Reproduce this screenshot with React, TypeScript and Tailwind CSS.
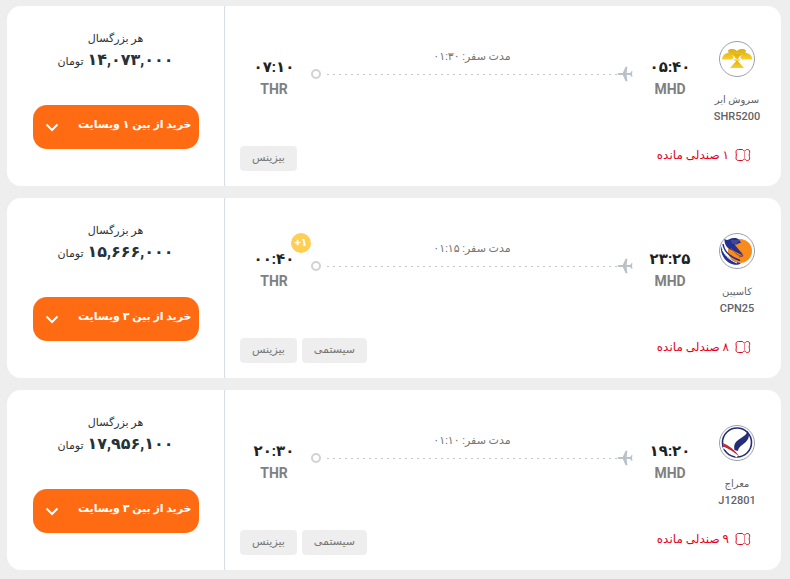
import type { ReactNode } from "react";

type Flight = {
  airline: string;
  code: string;
  logo: ReactNode;
  depart: string;
  arrive: string;
  nextDay?: boolean;
  duration: string;
  seats: string;
  tags: string[];
  price: string;
  sites: string;
};

function SoroushLogo() {
  return (
    <svg viewBox="0 0 36 36" className="size-9" aria-hidden="true">
      <circle cx="18" cy="18" r="17.5" fill="#fff" stroke="#9a9eb0" />
      <defs>
        <linearGradient id="gold" x1="0" y1="0" x2="0" y2="1">
          <stop offset="0" stopColor="#dcae12" />
          <stop offset="1" stopColor="#f8cf2c" />
        </linearGradient>
      </defs>
      <g fill="url(#gold)">
        <path d="M9 9.500C11 7.500 15.500 7.500 18 10C20.500 7.500 25 7.500 27 9.500L26.500 12C30 12 33 14.500 33.500 18.500H23L18 12.500L13 18.500H3C3.500 14.500 6 12 9.500 12Z" />
        <path d="M14 18.500H22L18.800 20L25 27H11L17.200 20Z" />
        <path d="M15 13H21L19 20H17Z" />
      </g>
      <path d="M13.500 14.500L17.500 19M22.500 14.500L18.500 19" stroke="#fff" strokeWidth=".8" />
    </svg>
  );
}

function CaspianLogo() {
  return (
    <svg viewBox="0 0 36 36" className="size-9" aria-hidden="true">
      <circle cx="18" cy="18" r="17.500" fill="#fff" stroke="#9a9eb0" />
      <circle cx="21" cy="18" r="12" fill="#f98b1c" />
      <path d="M5.500 5.500C8 9 10 5 15 5C19 5 21 7 22 10C19 9.500 19 12 15.500 11.500L21 18L24.500 23C20 21 16 18 12.500 17C8 15.500 5 11 5.500 5.500Z" fill="#25308d" />
      <path d="M2 13C4 21 10 27 22 30.500C17 33.500 9 31 5 25C2.500 21 1.500 17 2 13Z" fill="#25308d" />
      <path d="M4 11C5 18 11 24 21 27.500" stroke="#25308d" strokeWidth="1.500" fill="none" />
      <path d="M3.500 17C7 24 11 27 18 30" stroke="#fff" strokeWidth="1" fill="none" />
      <path d="M12 15C17 21 19 23 24 23L22 19M24 23L20 24" stroke="#8b4a3c" strokeWidth="1" fill="none" />
      <path d="M12 8L20 8M13 10L18 10" stroke="#7b82bc" strokeWidth=".6" />
    </svg>
  );
}

function MerajLogo() {
  return (
    <svg viewBox="0 0 36 36" className="size-9" aria-hidden="true">
      <circle cx="18" cy="18" r="17.500" fill="#fff" stroke="#9a9eb0" />
      <circle cx="18" cy="17.500" r="14.500" fill="#fff" stroke="#252c78" strokeWidth="1.600" />
      <path d="M28.500 5.500C31.500 11 29.500 15 25 18.500C20.500 22 19.500 23 19 26L15.500 25C14.500 20 16 17 20.500 14C25 11 28 9.500 28.500 5.500Z" fill="#252c78" />
      <path d="M4 18C10 20.500 16 25 20.500 31.500C15 27 10 24 5 22Z" fill="#c22b35" />
      <path d="M4 22.500C10 25 14 28 18 32" stroke="#fff" strokeWidth="1.500" fill="none" />
    </svg>
  );
}

function Plane() {
  return (
    <svg viewBox="0 0 16 16" className="size-4 shrink-0" fill="#b9c1c9" aria-hidden="true">
      <path d="M0.300 8C.300 7.400 2 7 3.500 7H5.800L8.600 .800H10.400L9.600 7H13.200L14.400 5.300H15.500L15 8L15.500 10.700H14.400L13.200 9H9.600L10.400 15.200H8.600L5.800 9H3.500C2 9 .300 8.600 .300 8Z" />
    </svg>
  );
}

function Ticket() {
  return (
    <svg viewBox="0 0 16 14" className="h-3.5 w-4 shrink-0" fill="none" stroke="#e50019" aria-hidden="true">
      <path d="M3.500 1.500H7.500C8 1.500 8.200 3 9.500 3C10.800 3 11 1.500 11.700 1.500H12.300C14 1.500 14.700 2.500 14.700 4C14.700 5.200 14.200 5.500 14.200 7C14.200 8.500 14.700 8.800 14.700 10C14.700 11.500 14 12.500 12.300 12.500H11.700C11 12.500 10.800 11 9.500 11C8.200 11 8 12.500 7.500 12.500H3.500C2 12.500 1 11.700 1 10.200C1 9 1.300 8.500 1.300 7C1.300 5.500 1 5 1 3.800C1 2.300 2 1.500 3.500 1.500Z" />
      <path d="M9.500 4.500V10" strokeDasharray="1 1" />
    </svg>
  );
}

const flights: Flight[] = [
  { airline: "سروش ایر", code: "SHR5200", logo: <SoroushLogo />, depart: "۰۵:۴۰", arrive: "۰۷:۱۰", duration: "۰۱:۳۰", seats: "۱", tags: ["بیزینس"], price: "۱۴,۰۷۳,۰۰۰", sites: "۱" },
  { airline: "کاسپین", code: "CPN25", logo: <CaspianLogo />, depart: "۲۳:۲۵", arrive: "۰۰:۴۰", nextDay: true, duration: "۰۱:۱۵", seats: "۸", tags: ["سیستمی", "بیزینس"], price: "۱۵,۶۶۶,۰۰۰", sites: "۳" },
  { airline: "معراج", code: "J12801", logo: <MerajLogo />, depart: "۱۹:۲۰", arrive: "۲۰:۳۰", duration: "۰۱:۱۰", seats: "۹", tags: ["سیستمی", "بیزینس"], price: "۱۷,۹۵۶,۱۰۰", sites: "۳" },
];

function Stop({ time, airport, nextDay }: { time: string; airport: string; nextDay?: boolean }) {
  return (
    <div className="relative flex flex-col items-center whitespace-nowrap">
      <time className="text-[15px] leading-6 font-bold text-[#212121]">{time}</time>
      <span className="text-sm leading-5 font-bold text-[#808080]">{airport}</span>
      {nextDay && (
        <span dir="ltr" className="absolute -top-3.5 -right-[17px] flex size-5 items-center justify-center rounded-full bg-[#ffce54] text-[11px] font-bold text-white">
          +۱
        </span>
      )}
    </div>
  );
}

function FlightCard({ flight }: { flight: Flight }) {
  return (
    <article className="flex overflow-hidden rounded-[14px] bg-white">
      <section className="flex min-w-0 flex-1 flex-col justify-between pb-[15px] pl-[15px]">
        <div className="flex items-start">
          <div className="flex w-[88px] shrink-0 flex-col items-center pt-[35px] whitespace-nowrap text-[#5f6368]">
            {flight.logo}
            <span className="mt-[15px] text-[10px] leading-4">{flight.airline}</span>
            <span className="text-[11px] leading-[18px] font-medium">{flight.code}</span>
          </div>
          <div className="w-[46px] shrink-0 pt-[49px]">
            <Stop time={flight.depart} airport="MHD" />
          </div>
          <div className="mr-3.5 min-w-0 flex-1 pt-[42px]">
            <p className="text-center text-[11px] leading-[18px] text-[#757575]">مدت سفر: {flight.duration}</p>
            <div className="flex items-center">
              <Plane />
              <span className="h-px flex-1 bg-[repeating-linear-gradient(to_left,#c4c7cb_0_2px,transparent_2px_6px)]" />
              <span className="mr-1 size-2.5 shrink-0 rounded-full border-2 border-[#cfd2d6]" />
            </div>
          </div>
          <div className="mr-[3px] w-[68px] shrink-0 pt-[49px]">
            <div className="mx-auto w-10">
              <Stop time={flight.arrive} airport="THR" nextDay={flight.nextDay} />
            </div>
          </div>
        </div>
        <div className="flex items-end justify-between pr-[30px]">
          <p className="flex h-8 items-center gap-1.5 text-xs text-[#e50019]">
            <Ticket />
            <span>{flight.seats} صندلی مانده</span>
          </p>
          <ul className="flex gap-[5px]">
            {flight.tags.map((tag) => (
              <li key={tag} className="flex h-[25px] items-center rounded-sm bg-[#eee] px-3 text-[11px] text-[#757575]">{tag}</li>
            ))}
          </ul>
        </div>
      </section>
      <aside className="flex h-[180px] w-[218px] shrink-0 flex-col items-center border-r border-[#d5dde5] pt-6 text-[#263238]">
        <p className="text-[11px] leading-[18px]">هر بزرگسال</p>
        <p className="flex items-baseline gap-1 leading-6">
          <strong className="text-base leading-6 font-bold">{flight.price}</strong>
          <span className="text-[11px]">تومان</span>
        </p>
        <button type="button" className="mt-[31px] flex h-11 w-[166px] shrink-0 items-center justify-between rounded-[14px] bg-[#ff6b13] pr-[7px] pl-3 text-[11px] font-bold whitespace-nowrap text-white">
          <span className="pb-1">خرید از بین {flight.sites} وبسایت</span>
          <svg viewBox="0 0 14 14" className="size-3.5 shrink-0" fill="none" stroke="currentColor" strokeWidth="2" aria-hidden="true">
            <path d="M1.500 4.500L7 10L12.500 4.500" />
          </svg>
        </button>
      </aside>
    </article>
  );
}

export default function App() {
  return (
    <main dir="rtl" className="flex min-h-screen flex-col gap-3 bg-[#eee] pt-1.5 pr-[9px] pb-[9px] pl-[7px] font-[Roboto,'DejaVu_Sans',sans-serif]">
      {flights.map((flight) => (
        <FlightCard key={flight.code} flight={flight} />
      ))}
    </main>
  );
}
